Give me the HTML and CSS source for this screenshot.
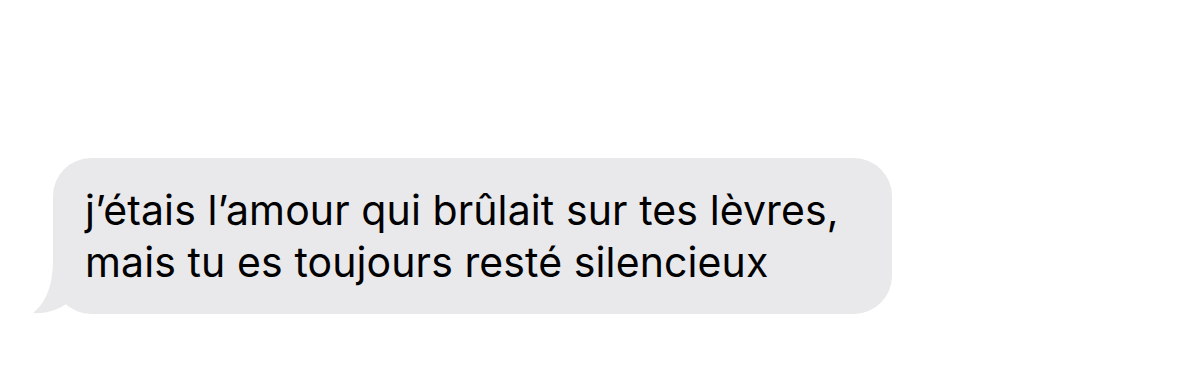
FILE: index.html
```html
<!DOCTYPE html>
<html lang="fr">
<head>
    <meta charset="UTF-8">
    <meta name="viewport" content="width=device-width, initial-scale=1.0">
    <title>Message</title>
    <link rel="stylesheet" href="styles.css">
</head>
<body>
    <div class="thread">
        <div class="bubble">
            <svg class="tail" width="40" height="56" viewBox="0 0 40 56">
                <path d="M20 0 C20 22 16 42 0 55 C12 56 26 52 36 44 L40 44 L40 0 Z" fill="#e9e9eb"/>
            </svg>
            <p class="text">j’étais l’amour qui brûlait sur tes lèvres,<br>mais tu es toujours resté silencieux</p>
        </div>
    </div>
</body>
</html>
```

FILE: styles.css
```css
body {
    margin: 0;
    padding: 0;
    background-color: #fff;
    font-family: Inter, "Noto Sans", sans-serif;
}
.thread {
    padding: 158px 0 0 53px;
}
.bubble {
    position: relative;
    width: 839px;
    height: 156px;
    box-sizing: border-box;
    background-color: #e9e9eb;
    border-radius: 38px;
    padding: 0 0 0 32px;
    display: flex;
    align-items: center;
}
.tail {
    position: absolute;
    left: -20px;
    bottom: 0;
}
.text {
    position: relative;
    margin: 0;
    font-size: 41px;
    line-height: 52px;
    letter-spacing: 0.1px;
    color: #000;
}
```
